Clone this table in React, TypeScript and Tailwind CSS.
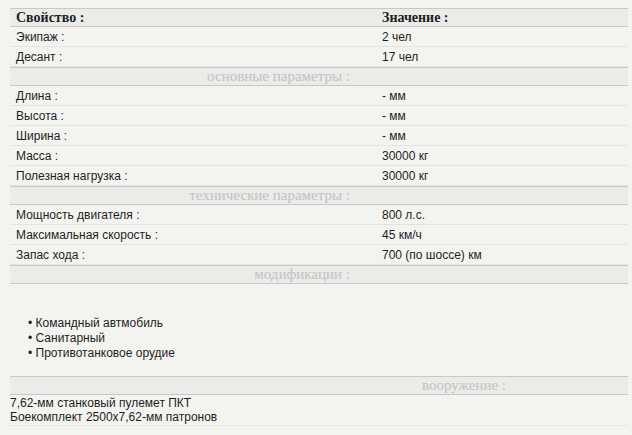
import React from 'react';

type Row = { label: string; value: string };

const sans = "font-['Liberation_Sans',Arial,sans-serif]";
const serif = "font-['Liberation_Serif','Times_New_Roman',serif]";

const crew: Row[] = [
  { label: 'Экипаж :', value: '2 чел' },
  { label: 'Десант :', value: '17 чел' },
];

const basic: Row[] = [
  { label: 'Длина :', value: '- мм' },
  { label: 'Высота :', value: '- мм' },
  { label: 'Ширина :', value: '- мм' },
  { label: 'Масса :', value: '30000 кг' },
  { label: 'Полезная нагрузка :', value: '30000 кг' },
];

const tech: Row[] = [
  { label: 'Мощность двигателя :', value: '800 л.с.' },
  { label: 'Максимальная скорость :', value: '45 км/ч' },
  { label: 'Запас хода :', value: '700 (по шоссе) км' },
];

const mods = ['Командный автмобиль', 'Санитарный', 'Противотанковое орудие'];

const DataRow = ({ row }: { row: Row }) => (
  <div className="grid grid-cols-[366px_1fr] h-[20px] border-b border-[#e4e4df] items-center text-[12px] text-[#1e1e1e]">
    <div className="pl-[6px]">{row.label}</div>
    <div className="pl-[6px]">{row.value}</div>
  </div>
);

const Section = ({ title }: { title: string }) => (
  <div className="grid grid-cols-[366px_1fr] h-[19px] border-y border-[#c8c8c8] bg-[#ebebea] items-center">
    <div className={`${serif} text-[15px] leading-none text-[#c2c2c2] text-right pr-[26px]`}>{title}</div>
    <div />
  </div>
);

export default function App() {
  return (
    <div className={`${sans} w-[632px] h-[435px] bg-[#f3f4f0] pt-[8px] pl-[10px] overflow-hidden`}>
      <div className="w-[618px]">
        <div className="grid grid-cols-[366px_1fr] h-[19px] border-y border-[#c8c8c8] bg-[#ebebea] items-center">
          <div className={`${serif} pl-[6px] text-[14px] font-bold leading-none text-[#1e1e1e]`}>Свойство :</div>
          <div className={`${serif} pl-[6px] text-[14px] font-bold leading-none text-[#1e1e1e]`}>Значение :</div>
        </div>
        {crew.map((r) => (
          <DataRow key={r.label} row={r} />
        ))}
        <Section title="основные параметры :" />
        {basic.map((r) => (
          <DataRow key={r.label} row={r} />
        ))}
        <Section title="технические параметры :" />
        {tech.map((r) => (
          <DataRow key={r.label} row={r} />
        ))}
        <Section title="модификации :" />

        <ul className="mt-[32px] pl-[18px] text-[12px] leading-[15px] text-[#1e1e1e]">
          {mods.map((m) => (
            <li key={m}>• {m}</li>
          ))}
        </ul>

        <div className="mt-[15px] grid grid-cols-[496px_1fr] h-[19px] border-y border-[#c8c8c8] bg-[#ebebea] items-center">
          <div className={`${serif} text-[15px] leading-none text-[#c2c2c2] text-right`}>вооружение :</div>
          <div />
        </div>
        <div className="pt-[1px] pb-[1px] border-b border-[#e8e8e3] text-[12px] leading-[14px] text-[#1e1e1e]">
          <div>7,62-мм станковый пулемет ПКТ</div>
          <div>Боекомплект 2500x7,62-мм патронов</div>
        </div>
      </div>
    </div>
  );
}
